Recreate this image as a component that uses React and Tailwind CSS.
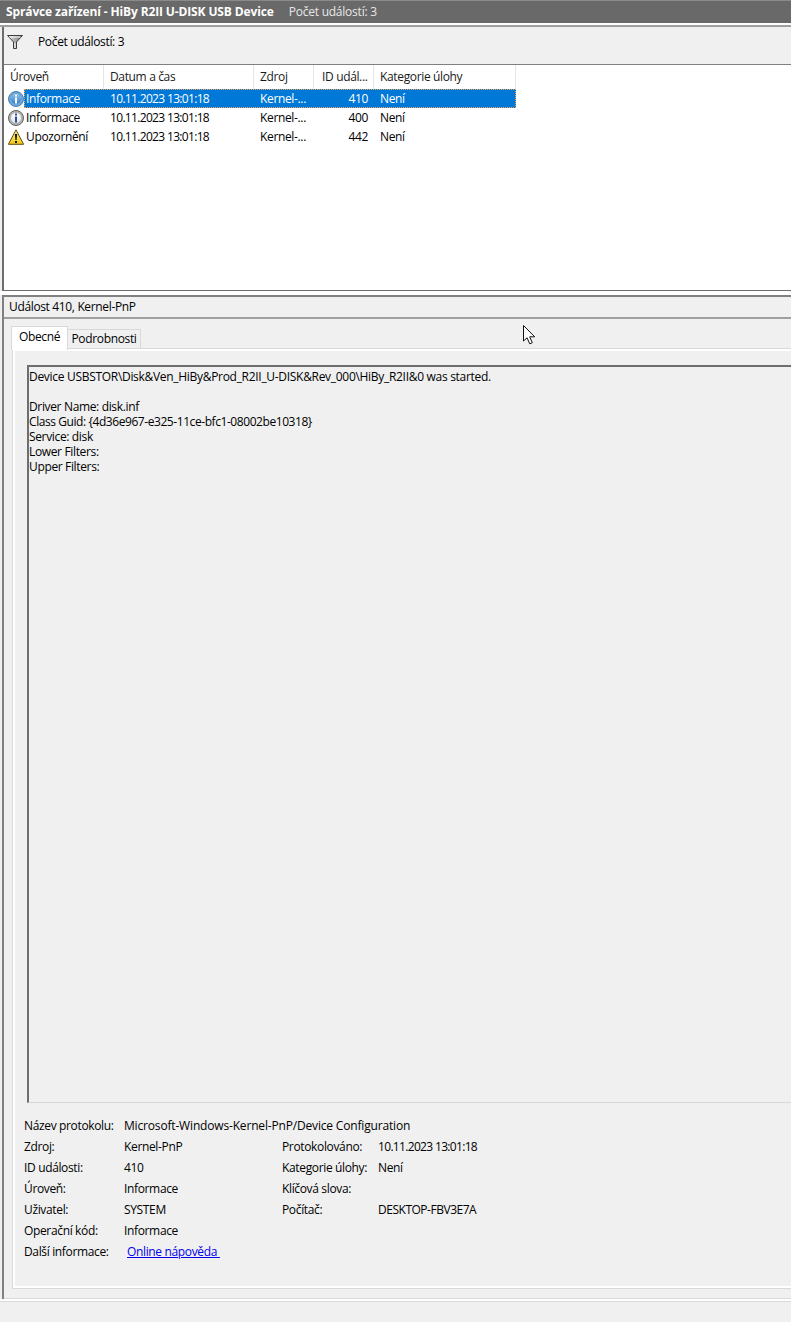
import { Fragment } from 'react';

const columns = [
  { label: 'Úroveň', className: 'w-[100px] pl-[6px]' },
  { label: 'Datum a čas', className: 'w-[150px] pl-[6px]' },
  { label: 'Zdroj', className: 'w-[60px] pl-[6px]' },
  { label: 'ID udál...', className: 'w-[60px] pl-[8px]' },
  { label: 'Kategorie úlohy', className: 'w-[142px] pl-[6px]' },
];

const events = [
  { level: 'Informace', icon: 'infoBlue', id: '410', selected: true },
  { level: 'Informace', icon: 'infoGray', id: '400' },
  { level: 'Upozornění', icon: 'warning', id: '442' },
];

const leftDetails = [
  ['Zdroj:', 'Kernel-PnP'],
  ['ID události:', '410'],
  ['Úroveň:', 'Informace'],
  ['Uživatel:', 'SYSTEM'],
  ['Operační kód:', 'Informace'],
];

const rightDetails = [
  ['Protokolováno:', '10.11.2023 13:01:18', 'tracking-[-0.67px]'],
  ['Kategorie úlohy:', 'Není', ''],
  ['Klíčová slova:', '', ''],
  ['Počítač:', 'DESKTOP-FBV3E7A', 'tracking-[-0.48px]'],
];

const messageLines = [
  { text: 'Device USBSTOR\\Disk&Ven_HiBy&Prod_R2II_U-DISK&Rev_000\\HiBy_R2II&0 was started.', className: 'tracking-[-0.3px]' },
  { text: '', className: '' },
  { text: 'Driver Name: disk.inf', className: '' },
  { text: 'Class Guid: {4d36e967-e325-11ce-bfc1-08002be10318}', className: 'tracking-[-0.43px]' },
  { text: 'Service: disk', className: '' },
  { text: 'Lower Filters:', className: '' },
  { text: 'Upper Filters:', className: '' },
];

const FilterIcon = () => (
  <svg width="16" height="16" viewBox="0 0 16 16">
    <defs>
      <linearGradient id="funnel" x1="0" y1="0" x2="1" y2="0">
        <stop offset="0" stopColor="#e8e8e8" />
        <stop offset="1" stopColor="#6f6f6f" />
      </linearGradient>
    </defs>
    <path d="M.5 1.5h15L9.5 8v6.5h-3V8z" fill="url(#funnel)" stroke="#3c3c3c" strokeWidth="1" />
    <path d="M2.5 2.5h11v1h-11z" fill="#fff" />
    <path d="M7.5 9h1v5h-1z" fill="#fff" />
  </svg>
);

const LevelIcon = ({ type }) => {
  if (type === 'warning') {
    return (
      <svg width="16" height="16" viewBox="0 0 16 16">
        <defs>
          <linearGradient id="warn" x1="0" y1="0" x2="0" y2="1">
            <stop offset="0" stopColor="#fff08a" />
            <stop offset="1" stopColor="#f2c811" />
          </linearGradient>
        </defs>
        <path d="M8 .8 15.6 15.3H.4z" fill="url(#warn)" stroke="#5e4d12" strokeWidth="1" strokeLinejoin="round" />
        <path d="M6.9 5h2.2l-.5 6H7.4z" fill="#111" />
        <rect x="7" y="12" width="2" height="2" fill="#111" />
      </svg>
    );
  }
  const blue = type === 'infoBlue';
  const gradId = blue ? 'infoB' : 'infoG';
  return (
    <svg width="16" height="16" viewBox="0 0 16 16">
      <defs>
        <linearGradient id={gradId} x1="0" y1="0" x2="0" y2="1">
          <stop offset="0" stopColor={blue ? '#8fc2ee' : '#ffffff'} />
          <stop offset="1" stopColor={blue ? '#2f7dcc' : '#e3e6ec'} />
        </linearGradient>
      </defs>
      <circle cx="8" cy="8" r="7.5" fill={blue ? '#6fa6d8' : '#b4b4b4'} stroke={blue ? '#4a7fb5' : '#5f5f5f'} strokeWidth="1" />
      <circle cx="8" cy="8" r="5" fill={`url(#${gradId})`} />
      <rect x="7" y="3.5" width="2" height="2" fill={blue ? '#fff' : '#28509a'} />
      <rect x="7" y="6.5" width="2" height="6" fill={blue ? '#fff' : '#28509a'} />
    </svg>
  );
};

const CursorIcon = () => (
  <svg width="14" height="20" viewBox="0 0 14 20" className="absolute left-[523px] top-[325px]">
    <path d="M.5.5v15.5l3.6-3.2 2.6 6 2.6-1.1-2.6-5.9h5z" fill="#fff" stroke="#111" strokeWidth="1" />
  </svg>
);

function EventRow({ event }) {
  const { selected } = event;
  return (
    <div className="flex h-[19px] items-center">
      <div className="ml-[8px] flex w-[16px] shrink-0">
        <LevelIcon type={event.icon} />
      </div>
      <div
        className={`flex h-[19px] w-[492px] items-center ${
          selected ? 'border border-dotted border-[#f0a860] bg-[#0078d7] text-white' : 'border border-transparent text-black'
        }`}
      >
        <span className="ml-[1px] w-[84px] shrink-0 truncate">{event.level}</span>
        <span className="w-[150px] shrink-0 tracking-[-0.67px]">10.11.2023 13:01:18</span>
        <span className="w-[60px] shrink-0">Kernel-...</span>
        <span className="w-[48px] shrink-0 text-right">{event.id}</span>
        <span className="ml-[12px]">Není</span>
      </div>
    </div>
  );
}

export default function App() {
  return (
    <div className="relative flex h-[1322px] w-[791px] flex-col overflow-hidden bg-[#f0f0f0] text-[12px] leading-[16px] text-black [font-family:'Open_Sans','Noto_Sans',sans-serif] tracking-[-0.35px]">
      {/* Title bar */}
      <div className="flex h-[23px] shrink-0 items-center border-t border-[#8a8a8a] bg-[#696969] pl-[6px] text-white">
        <span className="font-bold tracking-[-0.13px]">Správce zařízení - HiBy R2II U-DISK USB Device</span>
        <span className="ml-[15px] tracking-[-0.23px] text-[#e8e8e8]">Počet událostí: 3</span>
      </div>
      <div className="h-[4px] shrink-0 border-b-2 border-[#a0a0a0] bg-white" />

      {/* Event list pane */}
      <div className="ml-[2px] flex h-[264px] shrink-0 flex-col border-b border-l-2 border-[#6d6d6d]">
        <div className="flex h-[38px] shrink-0 items-center gap-[15px] border-b border-[#808080] pb-[8px] pl-[3px]">
          <FilterIcon />
          <span>Počet událostí: 3</span>
        </div>
        <div className="flex-1 bg-white">
          <div className="flex h-[24px] w-[512px]">
            {columns.map((col) => (
              <div key={col.label} className={`${col.className} flex items-center border-r border-[#e5e5e5] text-[#1a1a1a]`}>
                {col.label}
              </div>
            ))}
          </div>
          <div className="-ml-[4px]">
            {events.map((event) => (
              <EventRow key={event.id} event={event} />
            ))}
          </div>
        </div>
      </div>
      <div className="h-[4px] shrink-0 bg-white" />

      {/* Detail pane */}
      <div className="ml-[2px] flex h-[1004px] shrink-0 flex-col border-t-2 border-l-2 border-[#808080]">
        <div className="flex h-[22px] shrink-0 items-center border-b-2 border-[#a0a0a0] pb-[1px] pl-[5px]">Událost 410, Kernel-PnP</div>
        <div className="flex flex-1 flex-col pl-[8px] pt-[9px]">
          <div className="flex h-[20px] shrink-0 items-end">
            <div className="z-10 -mb-[2px] -ml-[1px] flex h-[24px] w-[57px] items-center justify-center border border-b-0 border-[#d9d9d9] bg-white pb-[4px]">Obecné</div>
            <div className="flex h-[19px] w-[73px] items-center justify-center border border-b-0 border-l-0 border-[#d9d9d9]">Podrobnosti</div>
          </div>
          <div className="flex h-[941px] shrink-0 flex-col border-y border-l border-[#d9d9d9] shadow-[inset_2px_2px_0_#fff,inset_0_-2px_0_#fff]">
            <div className="ml-[14px] mt-[16px] h-[738px] shrink-0 border-t-2 border-b border-l-2 border-[#6e6e6e] border-b-[#d9d9d9] pt-[2px] leading-[15px]">
              {messageLines.map((line, i) => (
                <div key={i} className={`h-[15px] whitespace-pre ${line.className}`}>{line.text}</div>
              ))}
            </div>
            <div className="ml-[11px] mt-[12px] flex">
              <div>
                <div className="flex h-[21px] items-center">
                  <span className="w-[100px]">Název protokolu:</span>
                  <span className="tracking-[-0.17px]">Microsoft-Windows-Kernel-PnP/Device Configuration</span>
                </div>
                <div className="flex">
                  <div className="grid w-[258px] auto-rows-[21px] grid-cols-[100px_1fr] items-center">
                    {leftDetails.map(([k, v]) => (
                      <Fragment key={k}>
                        <span>{k}</span>
                        <span>{v}</span>
                      </Fragment>
                    ))}
                  </div>
                  <div className="grid auto-rows-[21px] grid-cols-[96px_1fr] items-center">
                    {rightDetails.map(([k, v, cls]) => (
                      <Fragment key={k}>
                        <span>{k}</span>
                        <span className={cls}>{v}</span>
                      </Fragment>
                    ))}
                  </div>
                </div>
                <div className="flex h-[21px] items-center">
                  <span className="w-[103px]">Další informace:</span>
                  <span className="whitespace-pre text-[#0000ee] underline">Online nápověda </span>
                </div>
              </div>
            </div>
          </div>
        </div>
        <div className="h-[1px] shrink-0 bg-[#d9d9d9]" />
      </div>
      <div className="h-[3px] shrink-0 border-b border-[#d9d9d9] bg-white" />
      <div className="flex-1" />
      <CursorIcon />
    </div>
  );
}
